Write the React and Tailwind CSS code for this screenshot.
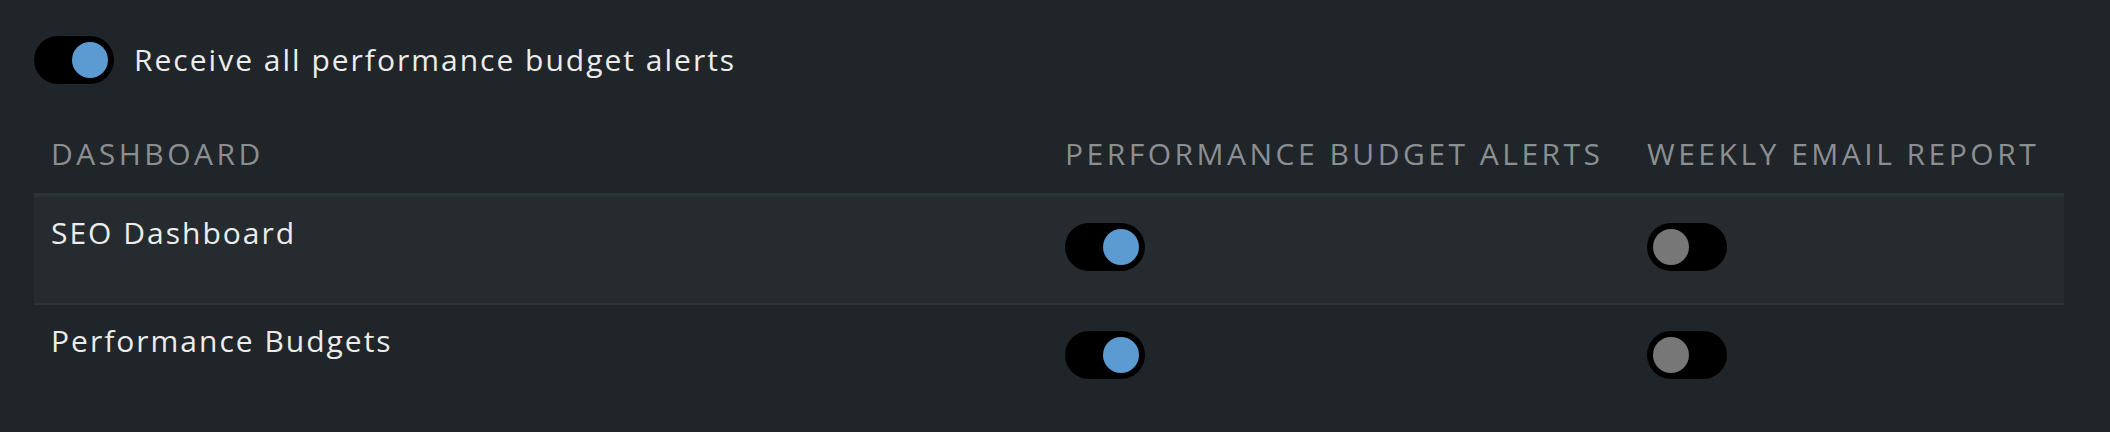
import React from "react";

// pill switch: black track, round knob (blue when on, grey when off)
function Switch({ on = false, label }) {
  return (
    <button
      type="button"
      role="switch"
      aria-checked={on}
      aria-label={label}
      className={
        "flex h-[48px] w-[80px] shrink-0 items-center rounded-full bg-black px-[6px] " +
        (on ? "justify-end" : "justify-start")
      }
    >
      <span className={"block h-[36px] w-[36px] rounded-full " + (on ? "bg-[#5b9bd1]" : "bg-[#777777]")} />
    </button>
  );
}

const rows = [
  { name: "SEO Dashboard", alerts: true, weekly: false },
  { name: "Performance Budgets", alerts: true, weekly: false },
];

export default function App() {
  const [all, setAll] = React.useState(true);

  return (
    <div
      className="min-h-[432px] bg-[#1f2529] pl-[34px] pr-[46px] pt-[36px] text-[30px] leading-[36px] tracking-[2px] text-[#ececec]"
      style={{ fontFamily: "'Open Sans', Lato, sans-serif" }}
    >
      {/* master toggle */}
      <div className="flex items-center gap-[20px]" onClick={() => setAll(!all)}>
        <Switch on={all} label="Receive all performance budget alerts" />
        <span>Receive all performance budget alerts</span>
      </div>

      {/* table */}
      <div className="grid grid-cols-[1014px_582px_434px]">
        <div className="px-[17px] pt-[52px] pb-[21px] uppercase tracking-[3.5px] text-[#8c8f92]">Dashboard</div>
        <div className="px-[17px] pt-[52px] pb-[21px] uppercase tracking-[3.5px] text-[#8c8f92]">Performance Budget Alerts</div>
        <div className="px-[17px] pt-[52px] pb-[21px] uppercase tracking-[3.5px] text-[#8c8f92]">Weekly Email Report</div>

        {rows.map((r, i) => (
          <div
            key={r.name}
            className={
              "col-span-3 grid h-[106px] grid-cols-[1014px_582px_434px] " +
              (i === 0 ? "border-t-4 border-b-2 border-[#2d3438] bg-[#252b2f] h-[112px]" : "")
            }
          >
            <div className="px-[17px] pt-[18px]">{r.name}</div>
            <div className="px-[17px] pt-[26px]">
              <Switch on={r.alerts} label={r.name + " alerts"} />
            </div>
            <div className="px-[17px] pt-[26px]">
              <Switch on={r.weekly} label={r.name + " weekly report"} />
            </div>
          </div>
        ))}
      </div>
    </div>
  );
}
